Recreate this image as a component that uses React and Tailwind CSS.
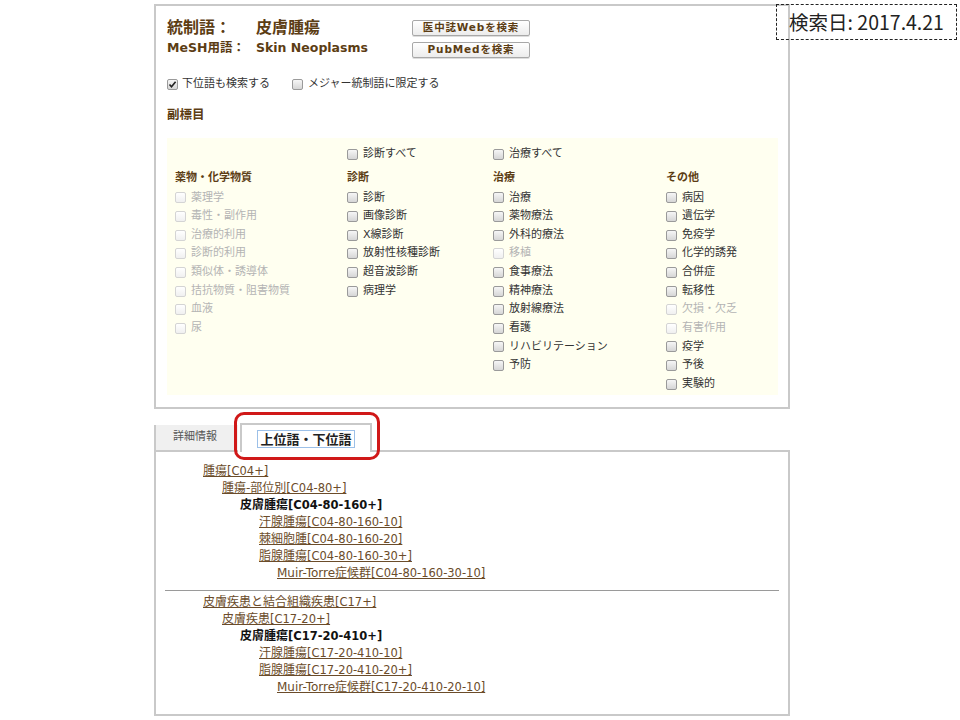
import React from 'react'

const FONT = { fontFamily: '"DejaVu Sans", "Noto Sans CJK JP", sans-serif' }
const JP = { fontFamily: '"Noto Sans CJK JP", "DejaVu Sans", sans-serif' }

const COLUMNS = [
  {
    title: '薬物・化学物質',
    items: [
      ['薬理学', true], ['毒性・副作用', true], ['治療的利用', true], ['診断的利用', true],
      ['類似体・誘導体', true], ['拮抗物質・阻害物質', true], ['血液', true], ['尿', true],
    ],
  },
  {
    all: '診断すべて',
    title: '診断',
    items: [['診断'], ['画像診断'], ['X線診断'], ['放射性核種診断'], ['超音波診断'], ['病理学']],
  },
  {
    all: '治療すべて',
    title: '治療',
    items: [
      ['治療'], ['薬物療法'], ['外科的療法'], ['移植', true], ['食事療法'], ['精神療法'],
      ['放射線療法'], ['看護'], ['リハビリテーション'], ['予防'],
    ],
  },
  {
    title: 'その他',
    items: [
      ['病因'], ['遺伝学'], ['免疫学'], ['化学的誘発'], ['合併症'], ['転移性'],
      ['欠損・欠乏', true], ['有害作用', true], ['疫学'], ['予後'], ['実験的'],
    ],
  },
]

const TREES = [
  [
    [0, '腫瘍', '[C04+]'],
    [1, '腫瘍-部位別', '[C04-80+]'],
    [2, '皮膚腫瘍', '[C04-80-160+]', true],
    [3, '汗腺腫瘍', '[C04-80-160-10]'],
    [3, '棘細胞腫', '[C04-80-160-20]'],
    [3, '脂腺腫瘍', '[C04-80-160-30+]'],
    [4, 'Muir-Torre症候群', '[C04-80-160-30-10]'],
  ],
  [
    [0, '皮膚疾患と結合組織疾患', '[C17+]'],
    [1, '皮膚疾患', '[C17-20+]'],
    [2, '皮膚腫瘍', '[C17-20-410+]', true],
    [3, '汗腺腫瘍', '[C17-20-410-10]'],
    [3, '脂腺腫瘍', '[C17-20-410-20+]'],
    [4, 'Muir-Torre症候群', '[C17-20-410-20-10]'],
  ],
]

const INDENT = ['pl-[38px]', 'pl-[57px]', 'pl-[75px]', 'pl-[94px]', 'pl-[112px]']

function Box({ disabled, checked }) {
  return (
    <span
      className={
        'relative inline-block w-[11px] h-[11px] shrink-0 rounded-[2px] border bg-gradient-to-b ' +
        (disabled ? 'border-[#d4d4d4] from-white to-[#f0f0f0]' : 'border-[#9a9a9a] from-[#f6f6f6] to-[#d6d6d6]')
      }
    >
      {checked && (
        <svg viewBox="0 0 11 11" className="absolute -left-px -top-px w-[11px] h-[11px]">
          <path d="M2.5 5.5 L4.5 7.8 L8.6 2.8" fill="none" stroke="#222" strokeWidth="1.6" />
        </svg>
      )}
    </span>
  )
}

function Check({ label, disabled, checked }) {
  return (
    <div className={'flex items-center gap-[5px] h-[18.65px] text-[11px] ' + (disabled ? 'text-[#b4b4b4]' : 'text-[#333]')}>
      <Box disabled={disabled} checked={checked} />
      <span>{label}</span>
    </div>
  )
}

function SearchButton({ children }) {
  return (
    <div className="w-[118px] h-[16px] flex items-center justify-center rounded-[2px] border border-[#a8a8a8] bg-gradient-to-b from-white to-[#ececec] text-[10.5px] font-bold tracking-[0.08em] text-[#5c3d14] shadow-[0_1px_0_#ddd]">
      {children}
    </div>
  )
}

export default function App() {
  return (
    <div className="relative w-[960px] h-[720px] bg-white overflow-hidden" style={FONT}>
      <div className="ml-[154px] pt-[4px] w-[636px]">
        {/* 上段: 検索条件 */}
        <div className="h-[405px] border-2 border-[#c9c9c9] pl-[11px] pr-[10px] pt-[8px]">
          <div className="flex">
            <div className="w-[245px] text-[#5c3d14] font-bold">
              <div className="flex items-center h-[23px] text-[16px]" style={JP}>
                <span className="w-[89px]">統制語：</span>
                <span>皮膚腫瘍</span>
              </div>
              <div className="flex items-center h-[23px] text-[12.5px]">
                <span className="w-[89px]">MeSH用語：</span>
                <span>Skin Neoplasms</span>
              </div>
            </div>
            <div className="flex flex-col gap-[6px] pt-[6px]">
              <SearchButton>医中誌Webを検索</SearchButton>
              <SearchButton>PubMedを検索</SearchButton>
            </div>
          </div>

          <div className="flex items-center gap-[22px] mt-[15px] h-[18px] text-[11px] text-[#333]">
            <div className="flex items-center gap-[4px]">
              <Box checked />
              <span>下位語も検索する</span>
            </div>
            <div className="flex items-center gap-[5px]">
              <Box />
              <span>メジャー統制語に限定する</span>
            </div>
          </div>

          <div className="mt-[13px] h-[18px] flex items-center text-[12.5px] font-bold text-[#5c3d14]">副標目</div>

          {/* 副標目の一覧 */}
          <div className="mt-[14px] h-[257px] bg-[#fffff0] pl-[8px] pt-[7px]">
            <div className="grid grid-cols-[172px_146px_173px_1fr]">
              {COLUMNS.map((col, i) => (
                <div key={i}>
                  <div className="h-[18px]">{col.all && <Check label={col.all} />}</div>
                  <div className="mt-[6px] h-[18px] flex items-center text-[11px] font-bold text-[#5c3d14]">{col.title}</div>
                  <div className="mt-[1.5px]">
                    {col.items.map(([label, disabled]) => (
                      <Check key={label} label={label} disabled={disabled} />
                    ))}
                  </div>
                </div>
              ))}
            </div>
          </div>
        </div>

        {/* 下段: タブ */}
        <div className="mt-[14px] flex items-end h-[29px]">
          <div className="w-[84px] h-[27px] bg-[#f0f0f0] border-l-2 border-b-2 border-[#c9c9c9] flex items-center pl-[17px] text-[11px] text-[#555]">
            詳細情報
          </div>
          <div className="relative ml-[2px] w-[132px] h-[29px] border-2 border-b-0 border-[#c9c9c9] bg-white flex items-center justify-center">
            <span className="px-[2px] leading-[16px] border border-[#9cc0e8] text-[13px] font-bold text-[#222]" style={JP}>
              上位語・下位語
            </span>
            <div className="absolute -left-[8px] -top-[13px] w-[146px] h-[48px] rounded-[10px] border-[3px] border-[#d01818]" />
          </div>
          <div className="flex-1 border-b-2 border-[#c9c9c9]" />
        </div>

        <div className="h-[264px] border-2 border-t-0 border-[#c9c9c9] pt-[11px] px-[9px]">
          {TREES.map((tree, t) => (
            <div key={t} className={t ? 'border-t border-[#9a9a9a] mt-[8px] pt-[3px]' : ''}>
              {tree.map(([lv, name, code, current]) => (
                <div key={code} className={'h-[17px] flex items-center ' + INDENT[lv]}>
                  {current ? (
                    <span className="font-bold text-[#111] text-[12px]">
                      {name}<span className="text-[11.5px]">{code}</span>
                    </span>
                  ) : (
                    <span className="underline text-[#6b4c2a] text-[12px]">
                      {name}<span className="text-[11.5px]">{code}</span>
                    </span>
                  )}
                </div>
              ))}
            </div>
          ))}
        </div>
      </div>

      {/* 検索日 */}
      <div
        className="absolute left-[776px] top-[4px] w-[181px] h-[36px] border border-dashed border-[#222] flex items-center justify-center text-[19.5px] text-[#222]"
        style={{ fontFamily: '"Noto Sans CJK JP", "Open Sans", sans-serif' }}
      >
        検索日: 2017.4.21
      </div>
    </div>
  )
}
